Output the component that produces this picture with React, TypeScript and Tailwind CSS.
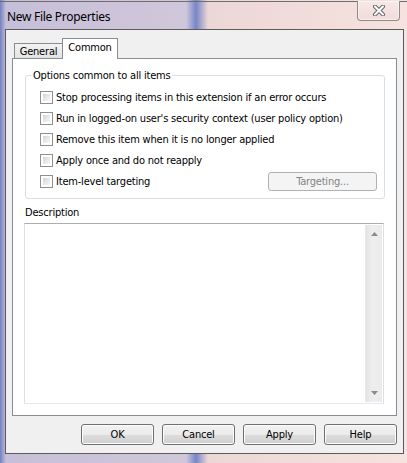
import React from 'react';

const options = [
  'Stop processing items in this extension if an error occurs',
  "Run in logged-on user's security context (user policy option)",
  'Remove this item when it is no longer applied',
  'Apply once and do not reapply',
];

const CheckBox: React.FC<{ label: string }> = ({ label }) => (
  <label className="flex items-center gap-[3px]">
    <span className="flex w-[13px] h-[13px] shrink-0 border border-[#8e8f8f] bg-white p-[2px]">
      <span className="block w-full h-full bg-[linear-gradient(135deg,#cfd2d6_0%,#e6e7e9_50%,#f7f7f7_100%)]" />
    </span>
    <span className="whitespace-nowrap">{label}</span>
  </label>
);

const DialogButton: React.FC<{ label: string }> = ({ label }) => (
  <button className="w-[73px] h-[21px] rounded-[3px] border border-[#707070] bg-[linear-gradient(#f2f2f2_0%,#ebebeb_50%,#dddddd_51%,#cfcfcf_100%)] shadow-[inset_0_0_0_1px_#fcfcfc] text-[11px] leading-none tracking-[-0.2px] text-black">
    {label}
  </button>
);

const Arrow: React.FC<{ up?: boolean }> = ({ up }) => (
  <svg width="7" height="4" viewBox="0 0 7 4">
    <path d={up ? 'M0 4 L3.5 0 L7 4 Z' : 'M0 0 L3.5 4 L7 0 Z'} fill="#8a8a8a" />
  </svg>
);

export default function App() {
  return (
    <div className="w-[407px] h-[463px] overflow-hidden flex flex-col bg-[linear-gradient(90deg,#7181c2_0px,#c6bfd9_6px,#d1c7da_186px,#7786c7_196px,#ecd7d7_208px,#f6e2de_100%)] font-['DejaVu_Sans_Condensed','DejaVu_Sans',sans-serif] text-[11px] leading-[13px] tracking-[-0.2px] text-black">
      {/* title bar */}
      <div className="mt-px h-[28px] shrink-0 border-t border-[#6e6e6e] flex justify-between">
        <span className="pl-[7px] pt-[7px] text-[12px] leading-[15px] tracking-[-0.3px] font-['Noto_Sans',sans-serif] text-black">
          New File Properties
        </span>
        <div className="mr-[7px] -mt-px w-[43px] h-[20px] rounded-b-[4px] border border-t-0 border-[#8d8a8c] bg-[linear-gradient(#f7e8e6,#f1dcd8)] shadow-[inset_0_0_0_1px_rgba(255,255,255,0.5)] flex items-center justify-center">
          <svg width="14" height="11" viewBox="0 0 14 11">
            <path d="M3 1.5 L11 9.5 M11 1.5 L3 9.5" stroke="#6a6a6a" strokeWidth="4" strokeLinecap="round" />
            <path d="M3 1.5 L11 9.5 M11 1.5 L3 9.5" stroke="#ffffff" strokeWidth="2" strokeLinecap="round" />
          </svg>
        </div>
      </div>

      {/* client area */}
      <div className="ml-[5px] w-[399px] h-[425px] shrink-0 border border-[#5b5b5b] bg-[#f0f0f0] px-[6px] pt-[8px] flex flex-col">
        {/* tabs */}
        <div className="h-[20px] flex items-end pl-[2px]">
          <div className="w-[49px] h-[15px] border border-b-0 border-[#898c95] bg-[linear-gradient(#f3f3f3,#e3e3e3)] text-center leading-[16px]">
            General
          </div>
          <div className="relative z-10 -ml-px -mb-px w-[56px] h-[21px] border border-b-0 border-[#898c95] bg-white text-center leading-[17px]">
            Common
          </div>
        </div>

        {/* tab panel */}
        <div className="h-[358px] border border-[#898c95] bg-white pl-[12px] flex flex-col">
          <fieldset className="mt-[10px] w-[360px] h-[130px] border border-[#d5dfe5] rounded-[3px] p-0">
            <legend className="ml-[5px] px-[2px] leading-[13px]">Options common to all items</legend>
            <div className="pl-[14px] pr-[7px] pt-[5px] flex flex-col">
              {options.map((o) => (
                <div key={o} className="h-[21px] flex items-center">
                  <CheckBox label={o} />
                </div>
              ))}
              <div className="h-[21px] flex items-center justify-between">
                <CheckBox label="Item-level targeting" />
                <button
                  disabled
                  className="w-[109px] h-[19px] rounded-[3px] border border-[#adb2b5] bg-[#f4f4f4] text-[11px] text-[#838383] leading-none tracking-[-0.2px]"
                >
                  Targeting...
                </button>
              </div>
            </div>
          </fieldset>

          <div className="mt-[7px]">Description</div>

          <div className="mt-[4px] -ml-px w-[360px] h-[181px] border border-[#dbdfe6] border-t-[#abadb3] border-b-[#e3e9ef] bg-white flex justify-end p-px">
            <div className="w-[17px] h-full border-l border-[#e8e8e8] bg-[linear-gradient(90deg,#e4e4e4,#eeeeee_40%,#ebebeb)] flex flex-col items-center justify-between py-[7px]">
              <Arrow up />
              <Arrow />
            </div>
          </div>
        </div>

        {/* buttons */}
        <div className="mt-[8px] flex justify-end gap-[8px]">
          <DialogButton label="OK" />
          <DialogButton label="Cancel" />
          <DialogButton label="Apply" />
          <DialogButton label="Help" />
        </div>
      </div>
    </div>
  );
}
